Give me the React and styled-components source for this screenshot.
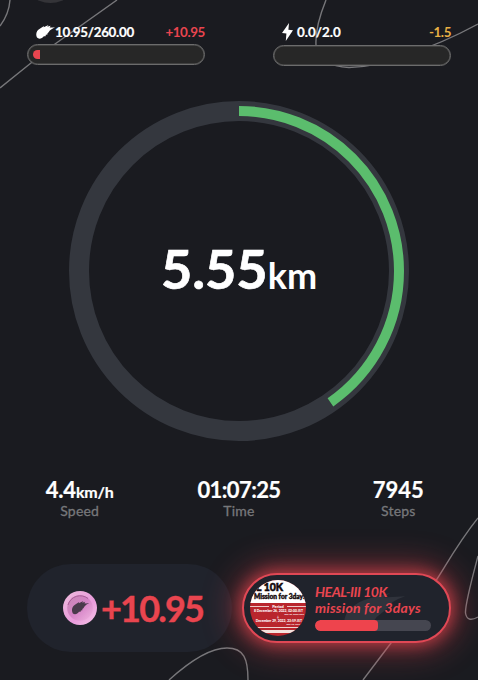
import React from 'react';
import styled, { createGlobalStyle } from 'styled-components';

const Global = createGlobalStyle`
  * { box-sizing: border-box; }
  body { margin: 0; background: #1a1b20; overflow: hidden; }
`;

const Screen = styled.main`
  position: relative;
  isolation: isolate;
  width: 478px;
  height: 680px;
  overflow: hidden;
  background: #1a1b20;
  color: #fff;
  font-family: Lato, sans-serif;
  font-weight: 700;
`;

const Backdrop = styled.svg`
  position: absolute;
  inset: 0;
  z-index: -1;
`;

const Header = styled.header`
  display: flex;
  justify-content: space-between;
  height: 101px;
  padding: 21px 27px 0;
`;

const Gauge = styled.section`
  width: 178px;
`;

const GaugeHead = styled.div`
  display: flex;
  align-items: center;
  height: ${p => p.$height}px;
  padding: 0 0 ${p => p.$lift}px 9px;
  font-size: 13.4px;
  line-height: 20px;
`;

const GaugeValue = styled.span`
  letter-spacing: ${p => p.$spacing}px;
  margin-left: ${p => p.$gap}px;
  -webkit-text-stroke: 0.2px currentColor;
`;

const GaugeDelta = styled.span`
  margin-left: auto;
  letter-spacing: -0.4px;
  color: ${p => p.$color};
`;

const GaugeTrack = styled.div`
  height: 21px;
  padding: 4px 5px;
  border: 1px solid #6c6c6c;
  box-shadow: inset 0 0 0 0.5px #5a5a5a;
  border-radius: 11px;
  background: #272727;
`;

const GaugeFill = styled.div`
  width: 7px;
  height: 9px;
  margin-top: 1px;
  border-radius: 5px 0 0 5px;
  background: #e9454f;
`;

const Dial = styled.section`
  display: grid;
  width: 340px;
  height: 340px;
  margin: 0 auto;
  > * { grid-area: 1 / 1; }
`;

const Distance = styled.div`
  align-self: center;
  padding-top: 1px;
  text-align: center;
  font-size: 54px;
  line-height: 64px;
  -webkit-text-stroke: 0.7px currentColor;
`;

const DistanceUnit = styled.span`
  font-size: 36px;
  -webkit-text-stroke: 0;
`;

const Stats = styled.section`
  display: grid;
  grid-template-columns: repeat(3, 1fr);
  height: 123px;
  padding-top: 36px;
  text-align: center;
`;

const StatValue = styled.div`
  height: 25px;
  font-size: 22px;
  line-height: 26px;
  letter-spacing: ${p => p.$spacing || 0}px;
  -webkit-text-stroke: 0.2px currentColor;
`;

const StatUnit = styled.span`
  font-size: 16px;
`;

const StatLabel = styled.div`
  color: #77787b;
  font-size: 14px;
  font-weight: 400;
  line-height: 17px;
  letter-spacing: 0.2px;
  -webkit-text-stroke: 0.3px currentColor;
`;

const Footer = styled.footer`
  display: flex;
  align-items: center;
  gap: 10px;
  height: 88px;
  padding: 0 27px;
`;

const EarnCard = styled.div`
  display: flex;
  align-items: center;
  gap: 4px;
  width: 205px;
  height: 88px;
  padding-left: 36px;
  border-radius: 44px;
  background: #20232c;
  color: #e9454f;
`;

const EarnValue = styled.div`
  font-size: 36px;
  line-height: 44px;
  letter-spacing: -1.8px;
  -webkit-text-stroke: 0.4px currentColor;
`;

const MissionCard = styled.div`
  display: flex;
  align-items: center;
  gap: 9px;
  width: 209px;
  height: 70px;
  padding-left: 6px;
  border: 2px solid #e04855;
  border-radius: 35px;
  background: #20232c;
  box-shadow: 0 0 14px 3px rgba(233, 69, 79, 0.55), 0 0 32px 8px rgba(233, 69, 79, 0.45);
`;

const Poster = styled.div`
  flex: none;
  width: 56px;
  height: 56px;
  overflow: hidden;
  border-radius: 50%;
  background: #b9262d;
  white-space: nowrap;
  font-weight: 900;
`;

const PosterTop = styled.div`
  height: 23px;
  padding-top: 2px;
  background: #fff;
  color: #15090b;
`;

const PosterTitle = styled.div`
  padding-left: 6px;
  font-size: 10.5px;
  line-height: 11px;
  -webkit-text-stroke: 0.5px #15090b;
`;

const PosterName = styled.div`
  padding-left: 4px;
  font-size: 6.6px;
  line-height: 7px;
  -webkit-text-stroke: 0.4px #15090b;
`;

const PosterPeriod = styled.div`
  display: flex;
  align-items: center;
  gap: 3px;
  height: 6px;
  font-size: 4px;
  &::before, &::after { content: ''; flex: 1; height: 1px; background: #ecc9c8; }
`;

const PosterLine = styled.div`
  height: ${p => p.$height}px;
  padding-right: ${p => p.$end}px;
  font-size: ${p => p.$size}px;
  line-height: ${p => p.$height}px;
  text-align: right;
`;

const PosterFoot = styled.div`
  height: 6px;
  margin-top: 1px;
  border-top: 1px solid #f0d4d1;
  border-bottom: 3px solid #f3e3de;
`;

const Mission = styled.div`
  display: grid;
  width: 116px;
  > * { grid-area: 1 / 1; }
`;

const Watermark = styled.svg`
  margin: 9px 0 0 28px;
`;

const MissionBody = styled.div`
  z-index: 0;
  color: #e9454f;
  font-size: 14px;
  font-style: italic;
  line-height: 16px;
  white-space: nowrap;
`;

const MissionText = styled.div`
  letter-spacing: ${p => p.$spacing}px;
`;

const Progress = styled.div`
  height: 11px;
  margin-top: 4px;
  overflow: hidden;
  border-radius: 6px;
  background: #454650;
`;

const ProgressFill = styled.div`
  height: 100%;
  border-radius: 6px 4px 4px 6px;
  background: #ee444d;
`;

const COMET =
  'M1 13.5 C-.8 9.5 .8 5.6 3.8 4 L8 1.2 L7.6 2.5 L12.6 0 L11.2 2 L14.6 .9 L13.6 2.6 Q16 3 19 2.3 Q15.6 4 13.8 6 Q12.6 8.2 11.4 9 L11.5 10.2 L9.8 10.5 L9.6 12 L7.8 12 C6.2 14.6 2.8 15.6 1 13.5Z';

const Comet = ({ width, height, color }) => (
  <svg width={width} height={height} viewBox="0 0 19 15" preserveAspectRatio="none">
    <path d={COMET} fill={color} />
  </svg>
);

const Bolt = () => (
  <svg width="11" height="18" viewBox="0 0 11 18">
    <path d="M7 0 L0 10 L4.4 10.6 L3.8 18 L11 7.3 L6.4 6.7Z" fill="#fff" />
  </svg>
);

const Coin = () => (
  <svg width="34" height="34" viewBox="0 0 34 34">
    <defs>
      <linearGradient id="rim" x1="0" y1="0" x2="1" y2="1">
        <stop offset="0" stopColor="#eebbdc" />
        <stop offset=".6" stopColor="#e99bdc" />
        <stop offset="1" stopColor="#f6c8e8" />
      </linearGradient>
      <linearGradient id="face" x1="0" y1="0" x2="1" y2="1">
        <stop offset="0" stopColor="#c887b2" />
        <stop offset=".5" stopColor="#d584c7" />
        <stop offset="1" stopColor="#f0b4e0" />
      </linearGradient>
    </defs>
    <circle cx="17" cy="17" r="17" fill="url(#rim)" />
    <circle cx="17" cy="17" r="12.8" fill="url(#face)" />
    <path d="M5 14 A12.6 12.6 0 0 1 25 7.5" fill="none" stroke="#a95e98" strokeWidth="1" />
    <g transform="translate(8.8 10) scale(.92 .9)">
      <path d={COMET} fill="#493a4b" />
    </g>
  </svg>
);

const Curves = () => (
  <Backdrop width="478" height="680" viewBox="0 0 478 680" fill="none" stroke="#77777a" strokeWidth="1.4">
    <circle cx="50.5" cy="-26.5" r="29.5" fill="#343438" stroke="none" />
    <path d="M10 0 Q9 14 0 26" />
    <path d="M117 0 L55 44 Q27 66 0 88" />
    <path d="M326 0 Q315 27 316 45 C319 62 332 67 349 67.5 C370 67 385 63 404 56 Q443 43 478 24" />
    <path d="M478 518 C458 543 445 567 437 579 L391 643 L363 680" />
    <path d="M478 556 C473 575 465 604 465.5 613 Q467 623 478 617" />
    <path d="M169 680 C190 661 210 648 227 648 C244 648 248 659 248 680" />
  </Backdrop>
);

const R = 160;
const LENGTH = 2 * Math.PI * R;

export default function App() {
  return (
    <>
      <Global />
      <Screen>
        <Curves />
        <Header>
          <Gauge>
            <GaugeHead $height={23} $lift={2}>
              <Comet width={19} height={14} color="#fff" />
              <GaugeValue $spacing={-0.3} $gap={0}>10.95/260.00</GaugeValue>
              <GaugeDelta $color="#e9454f">+10.95</GaugeDelta>
            </GaugeHead>
            <GaugeTrack><GaugeFill /></GaugeTrack>
          </Gauge>
          <Gauge>
            <GaugeHead $height={24} $lift={3}>
              <Bolt />
              <GaugeValue $spacing={0} $gap={4}>0.0/2.0</GaugeValue>
              <GaugeDelta $color="#e9b044">-1.5</GaugeDelta>
            </GaugeHead>
            <GaugeTrack />
          </Gauge>
        </Header>

        <Dial>
          <svg width="340" height="340" viewBox="0 0 340 340" fill="none">
            <circle cx="170" cy="170" r={R} stroke="#34373e" strokeWidth="20" />
            <circle
              cx="170" cy="170" r={R} stroke="#5bbd6d" strokeWidth="10"
              strokeDasharray={`${LENGTH * 0.403} ${LENGTH}`} transform="rotate(-90 170 170)"
            />
          </svg>
          <Distance>5.55<DistanceUnit>km</DistanceUnit></Distance>
        </Dial>

        <Stats>
          <div>
            <StatValue $spacing={-0.2}>4.4<StatUnit>km/h</StatUnit></StatValue>
            <StatLabel>Speed</StatLabel>
          </div>
          <div>
            <StatValue $spacing={-0.6}>01:07:25</StatValue>
            <StatLabel>Time</StatLabel>
          </div>
          <div>
            <StatValue>7945</StatValue>
            <StatLabel>Steps</StatLabel>
          </div>
        </Stats>

        <Footer>
          <EarnCard>
            <Coin />
            <EarnValue>+10.95</EarnValue>
          </EarnCard>
          <MissionCard>
            <Poster>
              <PosterTop>
                <PosterTitle>L 10K</PosterTitle>
                <PosterName>Mission for 3days</PosterName>
              </PosterTop>
              <PosterPeriod>Period</PosterPeriod>
              <PosterLine $height={4} $end={3} $size={3.4}>8 December 26, 2022, 02:00 JST</PosterLine>
              <PosterLine $height={3} $end={2} $size={2.4}>Dec 25, 2022 UTC</PosterLine>
              <PosterLine $height={3} $end={27} $size={3}>↓</PosterLine>
              <PosterLine $height={4} $end={4} $size={3.4}>December 29, 2022, 23:59 JST</PosterLine>
              <PosterLine $height={3} $end={6} $size={2.4}>Dec 29, UTC</PosterLine>
              <PosterFoot />
            </Poster>
            <Mission>
              <Watermark width="64" height="40" viewBox="0 0 19 15" preserveAspectRatio="none">
                <path d="M1 14 C-1 9 2 4 8 2 L14 0 L12 1.7 L18.5 1.2 Q14 3 13 6 L10 9 C8 13 4 15 1 14Z" fill="#30333c" />
              </Watermark>
              <MissionBody>
                <MissionText $spacing={-0.45}>HEAL-III 10K</MissionText>
                <MissionText $spacing={0.22}>mission for 3days</MissionText>
                <Progress><ProgressFill style={{ width: '54%' }} /></Progress>
              </MissionBody>
            </Mission>
          </MissionCard>
        </Footer>
      </Screen>
    </>
  );
}
